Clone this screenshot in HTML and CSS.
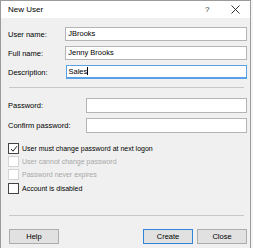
FILE: index.html
```html
<!DOCTYPE html>
<html lang="en">
  <head>
    <meta charset="UTF-8" />
    <title>New User</title>
    <link rel="stylesheet" href="styles.css">
  </head>
  <body>
    <div class="dialog">
      <div class="titlebar">
        <span class="title">New User</span>
        <span class="help-btn">?</span>
        <span class="close-btn">
          <svg width="9" height="9" viewBox="0 0 9 9">
            <path d="M0.5 0.5 L8.5 8.5 M8.5 0.5 L0.5 8.5" stroke="#333" stroke-width="1" fill="none" />
          </svg>
        </span>
      </div>
      <div class="body">
        <div class="fields">
          <div class="row">
            <label class="lbl">User name:</label>
            <div class="field">JBrooks</div>
          </div>
          <div class="row">
            <label class="lbl">Full name:</label>
            <div class="field">Jenny Brooks</div>
          </div>
          <div class="row">
            <label class="lbl">Description:</label>
            <div class="field focus">Sales<span class="caret"></span></div>
          </div>
        </div>
        <div class="sep"></div>
        <div class="fields pw">
          <div class="row">
            <label class="lbl">Password:</label>
            <div class="field"></div>
          </div>
          <div class="row">
            <label class="lbl">Confirm password:</label>
            <div class="field"></div>
          </div>
        </div>
        <div class="checks">
          <div class="check">
            <span class="box">
              <svg width="8" height="8" viewBox="0 0 8 8">
                <path d="M1 4 L3 6.2 L7 1.2" stroke="#222" stroke-width="1" fill="none" />
              </svg>
            </span>
            User must change password at next logon
          </div>
          <div class="check off"><span class="box"></span>User cannot change password</div>
          <div class="check off"><span class="box"></span>Password never expires</div>
          <div class="check last"><span class="box"></span>Account is disabled</div>
        </div>
        <div class="sep bottom"></div>
        <div class="buttons">
          <button class="btn">Help</button>
          <div class="right">
            <button class="btn default">Create</button>
            <button class="btn">Close</button>
          </div>
        </div>
      </div>
    </div>
  </body>
</html>
```
FILE: styles.css
```css
html {
  font-family: "Liberation Sans", Arial, sans-serif;
  font-size: 7.5px;
}
body {
  margin: 0;
  padding: 0;
  background: #f7f7f7;
  width: 253px;
  height: 248px;
  overflow: hidden;
}
.dialog {
  width: 249px;
  height: 247px;
  border: 1px solid #9a9a9a;
  border-bottom: none;
  background: #f0f0f0;
}
.titlebar {
  height: 17px;
  background: #fff;
  display: flex;
  align-items: center;
  color: #000;
}
.title {
  font-size: 8px;
  margin-left: 7px;
  flex: 1;
}
.help-btn {
  font-size: 8px;
  width: 10px;
  margin-right: 16px;
  color: #333;
}
.close-btn {
  display: flex;
  margin-right: 10px;
}
.body {
  padding: 9px 3px 0 7px;
}
.fields {
  display: flex;
  flex-direction: column;
  gap: 5px;
}
.row {
  display: flex;
  align-items: center;
  height: 14px;
}
.lbl {
  width: 58px;
  color: #000;
}
.field {
  width: 180px;
  height: 12px;
  line-height: 12px;
  border: 1px solid #b4b4b4;
  background: #fff;
  padding-left: 2px;
  color: #000;
}
.focus {
  width: 179px;
  height: 11px;
  line-height: 11px;
  border: 1px solid #5aa0e6;
  border-bottom-width: 2px;
}
.caret {
  display: inline-block;
  width: 1px;
  height: 8px;
  background: #000;
  vertical-align: -1px;
}
.sep {
  height: 1px;
  background: #c8c8c8;
  margin: 8px 3px 0 1px;
}
.pw {
  margin-top: 10px;
}
.pw .row {
  height: 15px;
}
.pw .field {
  width: 159px;
  height: 13px;
}
.pw .lbl {
  width: 79px;
}
.checks {
  margin-top: 9px;
  display: flex;
  flex-direction: column;
  font-size: 7px;
}
.check {
  height: 13px;
  display: flex;
  align-items: center;
  color: #000;
}
.check.last {
  margin-top: 1px;
}
.check .box {
  width: 9px;
  height: 9px;
  border: 1px solid #444;
  background: #fff;
  margin-right: 3px;
  display: flex;
  align-items: center;
  justify-content: center;
}
.check.off {
  color: #a8a8a8;
}
.check.off .box {
  border-color: #d4d4d4;
}
.sep.bottom {
  margin-top: 20px;
}
.buttons {
  margin-top: 13px;
  display: flex;
  justify-content: space-between;
  padding-left: 1px;
}
.right {
  display: flex;
  gap: 4px;
}
.btn {
  width: 50px;
  height: 15px;
  padding: 0;
  font-family: inherit;
  font-size: 7.5px;
  color: #000;
  background: #e1e1e1;
  border: 1px solid #adadad;
}
.btn.default {
  border-color: #2f86d8;
}
```
